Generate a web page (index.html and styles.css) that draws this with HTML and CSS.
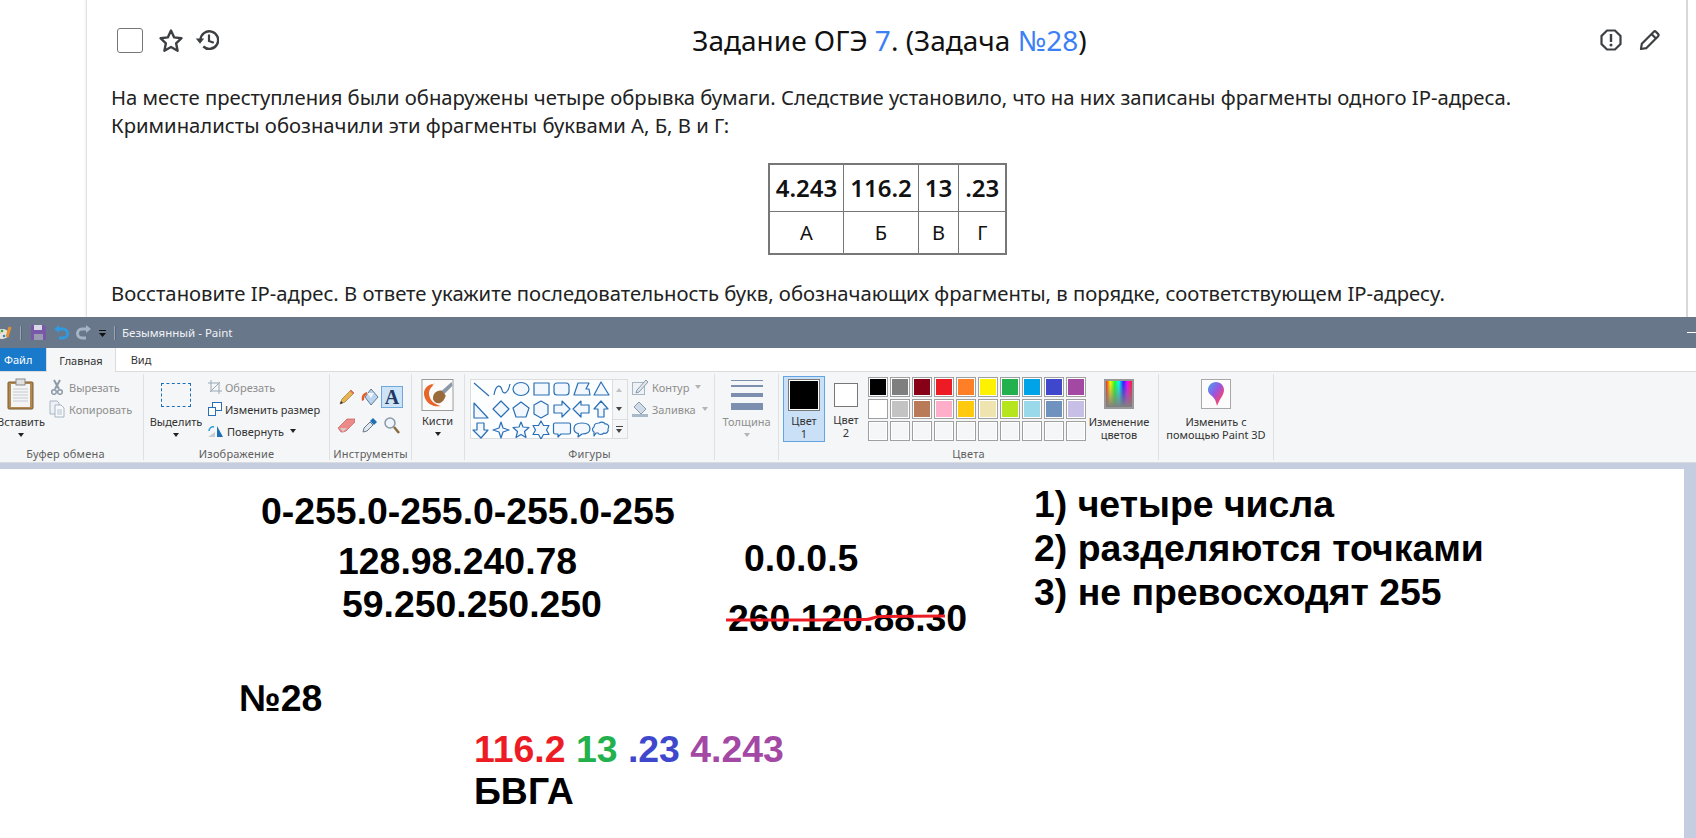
FILE: index.html
```html
<!DOCTYPE html>
<html lang="ru">
<head>
<meta charset="utf-8">
<title>Задание ОГЭ 7</title>
<link rel="stylesheet" href="styles.css">
</head>
<body>
<section class="page">
  <article class="card">
    <header class="task-head">
      <div class="head-left">
        <span class="check"></span>
        <svg class="ico star" width="26" height="25" viewBox="0 0 26 25"><path d="M13 2.500l3.200 6.900 7.300.8-5.400 5.100 1.500 7.400L13 19l-6.600 3.700 1.500-7.400-5.400-5.100 7.300-.8z" fill="none" stroke="#3c4043" stroke-width="2.400" stroke-linejoin="round"/></svg>
        <svg class="ico hist" width="24" height="24" viewBox="0 0 24 24"><path d="M5.500 12a8.800 8.800 0 1 1 2.800 6.500" fill="none" stroke="#3c4043" stroke-width="2.400"/><path d="M.8 10.500h8.400L5 15.800z" fill="#3c4043"/><path d="M14 6.500V13l4.800 1.800" fill="none" stroke="#3c4043" stroke-width="2.200"/></svg>
      </div>
      <h1 class="task-title">Задание ОГЭ <a class="lnk">7</a>. (Задача <a class="lnk">№28</a>)</h1>
      <div class="head-right">
        <svg class="ico" width="22" height="22" viewBox="0 0 22 22"><path d="M7 1.500h8L20.500 7v8L15 20.500H7L1.500 15V7z" fill="none" stroke="#3c4043" stroke-width="2.200"/><path d="M11 5v8" stroke="#3c4043" stroke-width="2.400"/><circle cx="11" cy="16" r="1.500" fill="#3c4043"/></svg>
        <svg class="ico" width="22" height="22" viewBox="0 0 22 22"><path d="M2 20l.8-5.200L14.800 2.800a1.500 1.500 0 0 1 2.100 0l2.300 2.300a1.500 1.500 0 0 1 0 2.100L7.200 19.200z M12.500 5l4.500 4.500" fill="none" stroke="#3c4043" stroke-width="2.200" stroke-linejoin="round"/></svg>
      </div>
    </header>
    <p class="para first">На месте преступления были обнаружены четыре обрывка бумаги. Следствие установило, что на них записаны фрагменты одного IP-адреса.<br>Криминалисты обозначили эти фрагменты буквами А, Б, В и Г:</p>
    <table class="frag">
      <tr><th>4.243</th><th>116.2</th><th>13</th><th>.23</th></tr>
      <tr><td>А</td><td>Б</td><td>В</td><td>Г</td></tr>
    </table>
    <p class="para last">Восстановите IP-адрес. В ответе укажите последовательность букв, обозначающих фрагменты, в порядке, соответствующем IP-адресу.</p>
  </article>
</section>

<section class="paint">
  <div class="titlebar">
    <svg class="qa" width="14" height="16" viewBox="0 0 14 16"><ellipse cx="4" cy="9" rx="7" ry="5" fill="#e8e4dc"/><circle cx="1" cy="8" r="1.300" fill="#e33"/><circle cx="4" cy="6" r="1.300" fill="#3a3"/><circle cx="6" cy="11" r="1.300" fill="#38c"/><path d="M9 12L12 2" stroke="#e89030" stroke-width="3"/></svg>
    <i class="qsep first-sep"></i>
    <svg class="qa save" width="15" height="15" viewBox="0 0 15 15"><path d="M0 0h13l2 2v13H0z" fill="#7a58a8"/><path d="M3 0h8v5H3z" fill="#d8d8e8"/><path d="M3 9h9v6H3z" fill="#9a9ab0"/></svg>
    <svg class="qa undo" width="15" height="15" viewBox="0 0 15 15"><path d="M4 4h5a4 4 0 0 1 0 9H5" fill="none" stroke="#2f9ae0" stroke-width="3"/><path d="M0 4l5-4v8z" fill="#2f9ae0"/></svg>
    <svg class="qa redo" width="15" height="15" viewBox="0 0 15 15"><path d="M11 4H6a4 4 0 0 0 0 9h4" fill="none" stroke="#a3b4c4" stroke-width="3"/><path d="M15 4l-5-4v8z" fill="#a3b4c4"/></svg>
    <svg class="qa drop" width="7" height="7" viewBox="0 0 7 7"><path d="M0 0h7v1H0zM0 3h7L3.500 7z" fill="#111"/></svg>
    <i class="qsep"></i>
    <span class="win-title">Безымянный - Paint</span>
    <span class="win-min"></span>
  </div>
  <nav class="tabs">
    <span class="tab file">Файл</span>
    <span class="tab home">Главная</span>
    <span class="tab view">Вид</span>
  </nav>
  <div class="ribbon">
    <div class="group g-clip">
      <div class="gbody">
        <div class="big paste">
          <svg class="big-ico" width="28" height="32" viewBox="0 0 28 32"><rect x="1" y="4" width="25" height="27" rx="1" fill="#b08850" stroke="#7a5a30"/><rect x="4" y="6" width="19" height="23" fill="#f4f4f4"/><path d="M6 11h15M6 14h15M6 17h15M6 20h15M6 23h15" stroke="#c4cad4"/><rect x="9" y="1" width="9" height="6" fill="#e0e0e0" stroke="#8a8a8a"/></svg>
          <span>Вставить</span><span class="caret"></span>
        </div>
        <div class="col clip-col">
          <div class="row off"><svg width="16" height="16" viewBox="0 0 16 16"><path d="M5 1l5 9M11 1L6 10" stroke="#8c9aa8" stroke-width="2"/><circle cx="5" cy="13" r="2.300" fill="none" stroke="#8c9aa8" stroke-width="1.500"/><circle cx="11" cy="13" r="2.300" fill="none" stroke="#8c9aa8" stroke-width="1.500"/></svg><span>Вырезать</span></div>
          <div class="row off"><svg width="16" height="18" viewBox="0 0 16 18"><path d="M1 1h7l2 2v11H1z" fill="#eef2f6" stroke="#a6b4c4"/><path d="M6 5h6l3 3v9H6z" fill="#f8f9fa" stroke="#a6b4c4"/><path d="M8 10h5M8 12h5M8 14h5" stroke="#b6c2d0"/></svg><span>Копировать</span></div>
        </div>
      </div>
      <div class="glabel clip-label">Буфер обмена</div>
    </div>

    <div class="group g-image">
      <div class="gbody">
        <div class="big select">
          <span class="dashed"></span>
          <span>Выделить</span><span class="caret"></span>
        </div>
        <div class="col img-col">
          <div class="row off"><svg width="14" height="14" viewBox="0 0 14 14"><path d="M3 0v11h11M0 3h11v11M2 12L12 2" fill="none" stroke="#9aa8b6"/></svg><span>Обрезать</span></div>
          <div class="row"><svg width="14" height="14" viewBox="0 0 14 14"><rect x="4.500" y=".5" width="9" height="8" fill="#fff" stroke="#2a6fb5"/><rect x=".5" y="5.500" width="7" height="8" fill="#fff" stroke="#2a6fb5"/></svg><span>Изменить размер</span></div>
          <div class="row"><svg width="16" height="14" viewBox="0 0 16 14"><path d="M9 13V2l6 11z" fill="#1f6fb5"/><path d="M0 13l7-5v5z" fill="#c8cdd2"/><path d="M1 7a4 4 0 0 1 5-4" fill="none" stroke="#2f9ae0" stroke-width="1.500"/></svg><span>Повернуть</span><span class="caret inline"></span></div>
        </div>
      </div>
      <div class="glabel">Изображение</div>
    </div>

    <div class="group g-tools">
      <div class="gbody">
        <div class="tools">
          <svg width="16" height="16" viewBox="0 0 16 16"><path d="M1 15l2-5L12 1l3 3-9 9z" fill="#e8b450" stroke="#9a7a40" stroke-width=".7"/><path d="M11 2l3 3 1-1-3-3z" fill="#e06060"/><path d="M1 15l1-3 2 2z" fill="#333"/></svg>
          <svg width="18" height="18" viewBox="0 0 18 18"><path d="M10 1l7 8-7 8-6-8z" fill="#b9d4ec" stroke="#5a7a9a"/><path d="M6 5h7l-3 5z" fill="#f4f8fc"/><path d="M6 4C2 5 0 8 1 13l2-1c0-3 1-5 3-6z" fill="#e85a20"/></svg>
          <span class="tool-a">A</span>
          <svg width="17" height="15" viewBox="0 0 17 15"><path d="M0 10l9-9h8v3l-9 9-3 1H3z" fill="#ec8a88" stroke="#c06060" stroke-width=".7"/><path d="M5 14l-3-4h7z" fill="#d8c8c8"/></svg>
          <svg width="16" height="16" viewBox="0 0 16 16"><path d="M1 15l1-4 6-6 3 3-6 6z" fill="#dfe8f0" stroke="#6c7a88"/><path d="M8 4l3-3 4 4-3 3z" fill="#1f6fb5"/></svg>
          <svg width="16" height="17" viewBox="0 0 16 17"><circle cx="6" cy="6" r="5" fill="#eef4fa" stroke="#8a98a8" stroke-width="1.500"/><path d="M10 10l5 6" stroke="#8a6a40" stroke-width="2.500"/></svg>
        </div>
      </div>
      <div class="glabel">Инструменты</div>
    </div>

    <div class="group g-brush">
      <div class="gbody">
        <div class="big brush">
          <svg class="big-ico" width="33" height="33" viewBox="0 0 33 33"><rect x=".5" y=".5" width="32" height="32" fill="#fbfbfb" stroke="#9a9a9a"/><path d="M31 3L20 13l3 3 9-9z" fill="#8a98a8"/><path d="M21 12c-5-1-10 3-9 9 2 6 10 6 13-4z" fill="#9a6a3a"/><path d="M14 5C6 5 1 11 3 18c2 7 8 11 17 10-7-2-11-6-12-11-1-4 1-8 4-10l-1-1z" fill="#e8642a"/></svg>
          <span>Кисти</span><span class="caret"></span>
        </div>
      </div>
    </div>

    <div class="group g-shapes">
      <div class="gbody">
        <div class="shapes">
          <svg width="142" height="60" viewBox="0 0 142 60" fill="#f2f8fd" stroke="#2a6fb5" stroke-width="1.200" stroke-linejoin="round">
            <path d="M3 4l15 13" fill="none"/>
            <path d="M23 16c2-12 7-10 8-5s6 4 8-6" fill="none"/>
            <ellipse cx="50" cy="10" rx="8" ry="6.500"/>
            <rect x="63" y="4" width="15" height="12"/>
            <rect x="83" y="4" width="15" height="12" rx="3"/>
            <path d="M103 16l4-12h11l-3 6h3l1 6z"/>
            <path d="M130 3l8 13h-15z"/>
            <path d="M3 24l14 15H3z"/>
            <path d="M30 22l8 8-8 8-8-8z"/>
            <path d="M50 23l8 6-3 9H45l-3-9z"/>
            <path d="M70 22l7 4v9l-7 4-7-4v-9z"/>
            <path d="M83 26h8v-4l8 8-8 8v-4h-8z"/>
            <path d="M118 26h-8v-4l-8 8 8 8v-4h8z"/>
            <path d="M130 22l7 8h-4v8h-6v-8h-4z"/>
            <path d="M6 44h7v7h4l-7 8-8-8h4z"/>
            <path d="M30 43l2 6 6 2-6 2-2 6-2-6-6-2 6-2z"/>
            <path d="M50 43l2 5 6 .5-4.500 4 1.500 6-5-3-5 3 1.500-6-4.500-4 6-.5z"/>
            <path d="M70 42l2.500 4.500H78l-2.500 4.500 2.500 4.500h-5.500L70 60l-2.500-4.500H62l2.500-4.500-2.500-4.500h5.500z"/>
            <path d="M84 44h14a1.500 1.500 0 0 1 1.500 1.500v8A1.500 1.500 0 0 1 98 55H90l-3 3v-3h-3a1.500 1.500 0 0 1-1.500-1.500v-8A1.500 1.500 0 0 1 84 44z"/>
            <path d="M111 44c5 0 8 2 8 5.500s-3 5.500-8 5.500l-4 3 .5-3.500c-3-.5-4.500-3-4.500-5 0-3.500 3-5.500 8-5.500z"/>
            <path d="M128 44c3-2 6 0 6 1 3-.5 5 3 3 5 1 3-2 5-4 4-2 2-5 2-6 0h-2l-2 3v-4c-2-1-2-4 0-5 0-3 3-4 5-4z"/>
          </svg>
        </div>
        <div class="scroller">
          <span class="sc up"></span>
          <span class="sc dn"></span>
          <span class="sc more"></span>
        </div>
        <div class="col shape-col">
          <div class="row off"><svg width="16" height="16" viewBox="0 0 16 16"><rect x=".5" y="3.500" width="12" height="12" fill="#eef2f6" stroke="#a6b4c4"/><path d="M5 11L14 1l2 2-9 10-3 1z" fill="#dfe6ee" stroke="#8c9aa8"/></svg><span>Контур</span><span class="caret inline pale"></span></div>
          <div class="row off"><svg width="16" height="16" viewBox="0 0 16 16"><path d="M7 1l7 7-5 5-7-7z" fill="#cfdbe8" stroke="#8c9aa8"/><path d="M0 13h16v3H0z" fill="#a9bacb"/></svg><span>Заливка</span><span class="caret inline pale"></span></div>
        </div>
      </div>
      <div class="glabel">Фигуры</div>
    </div>

    <div class="group g-size">
      <div class="gbody">
        <div class="big size off">
          <div class="lines"><i class="l1"></i><i class="l2"></i><i class="l3"></i><i class="l4"></i></div>
          <span>Толщина</span><span class="caret pale"></span>
        </div>
      </div>
    </div>

    <div class="group g-colors">
      <div class="gbody">
        <div class="c-btn active">
          <span class="sw black"></span>
          <span>Цвет</span><span>1</span>
        </div>
        <div class="c-btn second">
          <span class="sw white"></span>
          <span>Цвет</span><span>2</span>
        </div>
        <div class="palette">
          <i class="p1"></i><i class="p2"></i><i class="p3"></i><i class="p4"></i><i class="p5"></i><i class="p6"></i><i class="p7"></i><i class="p8"></i><i class="p9"></i><i class="p10"></i>
          <i class="p11"></i><i class="p12"></i><i class="p13"></i><i class="p14"></i><i class="p15"></i><i class="p16"></i><i class="p17"></i><i class="p18"></i><i class="p19"></i><i class="p20"></i>
          <i></i><i></i><i></i><i></i><i></i><i></i><i></i><i></i><i></i><i></i>
        </div>
        <div class="big edit">
          <span class="spectrum"></span>
          <span>Изменение</span><span>цветов</span>
        </div>
      </div>
      <div class="glabel">Цвета</div>
    </div>

    <div class="group g-3d">
      <div class="gbody">
        <div class="big p3d">
          <span class="p3d-box"><svg width="18" height="26" viewBox="0 0 18 26"><defs><linearGradient id="pg" x1="0" y1="0" x2="1" y2="1"><stop offset="0" stop-color="#3fa6f0"/><stop offset=".45" stop-color="#9a55e0"/><stop offset=".75" stop-color="#f0457a"/><stop offset="1" stop-color="#ffb020"/></linearGradient></defs><path d="M9 1c5 0 8 4 8 8 0 5-4 8-7 16-1-5-2-7-5-10C2 13 1 11 1 9c0-4 3-8 8-8z" fill="url(#pg)"/></svg></span>
          <span>Изменить с</span><span>помощью Paint 3D</span>
        </div>
      </div>
    </div>
  </div>
  <div class="strip"></div>
  <div class="workspace">
    <div class="canvas">
      <span class="ink t1">0-255.0-255.0-255.0-255</span>
      <span class="ink t2">128.98.240.78</span>
      <span class="ink t3">59.250.250.250</span>
      <span class="ink t4">0.0.0.5</span>
      <span class="ink t5">260.120.88.30</span>
      <svg class="strike" width="222" height="10" viewBox="0 0 222 10"><path d="M1 7h90l50-.5c6 0 8-3 14-3l65-.5" fill="none" stroke="#ed1c24" stroke-width="3"/></svg>
      <span class="ink t6">№28</span>
      <span class="ink t7"><b class="red">116.2</b> <b class="green">13</b> <b class="blue">.23</b> <b class="violet">4.243</b></span>
      <span class="ink t8">БВГА</span>
      <div class="ink rules">1) четыре числа<br>2) разделяются точками<br>3) не превосходят 255</div>
    </div>
  </div>
</section>
</body>
</html>
```
FILE: styles.css
```css
* { box-sizing: border-box; }
html, body { margin: 0; padding: 0; }
body { width: 1696px; height: 838px; overflow: hidden; background: #fff; font-family: "Noto Sans", sans-serif; color: #111; }

/* task card */
.page { height: 317px; padding-left: 86px; padding-right: 8px; overflow: hidden; }
.card { height: 317px; padding: 27px 24px 0 24px; border-left: 1px solid #e4e4e4; border-right: 2px solid #d8d8d8; box-shadow: -1px 0 2px rgba(0,0,0,.06); }
.task-head { display: flex; align-items: center; height: 26px; position: relative; }
.head-left { display: flex; align-items: center; padding-left: 6px; }
.check { width: 26px; height: 25px; border: 1.500px solid #777; border-radius: 3px; margin-right: 15px; }
.star { margin-right: 11px; }
.task-title { flex: 1; margin: 0; font-weight: 400; font-size: 28px; line-height: 34px; text-align: center; color: #111; padding-right: 40px; }
.lnk { color: #3d7ff5; }
.head-right { display: flex; gap: 17px; padding-right: 1px; }
.para { margin: 0; font-size: 20.250px; line-height: 28px; color: #222; white-space: nowrap; }
.para.first { margin-top: 30px; }
.para.last { margin-top: 24px; }
.frag { border-collapse: collapse; margin: 24px auto 0; border: 2px solid #777; position: relative; left: 1px; }
.frag th, .frag td { border: 1px solid #777; text-align: center; padding: 0 6px; color: #111; }
.frag th { height: 47px; font-weight: 600; font-size: 24px; }
.frag td { height: 43px; font-size: 20px; }

/* paint */
.paint { height: 521px; display: flex; flex-direction: column; font-size: 11px; }
.titlebar { height: 31px; background: #68778a; display: flex; align-items: center; color: #f0f2f5; font-size: 11.500px; position: relative; }
.qa { flex: none; }
.qa:first-child { margin-left: -2px; }
.qsep { width: 2px; height: 14px; background: #9aa5b3; margin-left: 8px; border-right: 1px solid #58677a; }
.first-sep { margin-left: 8px; }
.save { margin-left: 9px; }
.undo { margin-left: 8px; }
.redo { margin-left: 7px; }
.drop { margin-left: 8px; margin-top: 2px; }
.win-title { margin-left: 6px; }
.win-min { margin-left: auto; width: 9px; height: 1px; background: #fff; }

.tabs { height: 24px; display: flex; background: #fff; border-bottom: 1px solid #dadbdc; align-items: stretch; font-size: 11px; }
.tab { display: flex; align-items: center; justify-content: center; }
.file { width: 46px; background: #1979ca; color: #fff; justify-content: flex-start; padding-left: 4px; }
.home { width: 70px; background: #f5f6f7; border: 1px solid #dadbdc; border-bottom: 0; border-top: 0; height: 24px; color: #333; }
.view { width: 50px; color: #333; }

.ribbon { height: 91px; background: #f5f6f7; display: flex; padding-top: 2px; border-bottom: 1px solid #dadbdc; color: #333; line-height: 13px; }
.group { display: flex; flex-direction: column; height: 86px; border-right: 1px solid #dfe0e1; flex: none; }
.gbody { height: 73px; display: flex; flex: none; }
.glabel { height: 13px; text-align: center; color: #5f5f5f; line-height: 13px; letter-spacing: .2px; }
.clip-label { padding-right: 12px; }
.g-clip { width: 144px; }
.g-image { width: 186px; }
.g-tools { width: 82px; }
.g-brush { width: 53px; }
.g-shapes { width: 250px; }
.g-size { width: 64px; }
.g-colors { width: 380px; }
.g-3d { width: 115px; }

.big { display: flex; flex-direction: column; align-items: center; white-space: nowrap; padding-top: 5px; }
.big-ico { height: 32px; margin-bottom: 4px; flex: none; }
.caret { display: block; width: 0; height: 0; border: 3.500px solid transparent; border-top: 4px solid #222; border-bottom: 0; margin-top: 5px; }
.caret.inline { display: inline-block; margin: 0 0 0 6px; }
.caret.pale { border-top-color: #b4b4b4; }
.row { height: 22px; display: flex; align-items: center; white-space: nowrap; position: relative; }
.row svg { flex: none; }
.col { padding-top: 2px; }
.off { color: #8e8e8e; }

.paste { width: 44px; margin-left: -1px; }
.paste .big-ico { margin-top: -1px; margin-bottom: 5px; }
.clip-col { margin-left: 6px; }
.clip-col .row svg { margin-right: 4px; }
.select { width: 50px; margin-left: 7px; }
.dashed { width: 30px; height: 24px; border: 1px dashed #1f6fb5; margin: 4px 0 8px; }
.img-col { margin-left: 7px; }
.img-col .row svg { margin-right: 3px; }
.tools { display: grid; grid-template-columns: 23px 23px 22px; grid-template-rows: 28px 28px; align-items: center; justify-items: center; padding: 9px 0 0 5px; height: 60px; }
.tool-a { width: 22px; height: 22px; background: #cde4f7; border: 1px solid #6ea8dc; font-family: "Liberation Serif", serif; font-weight: 700; font-size: 20px; line-height: 20px; text-align: center; color: #1f3864; }
.brush { width: 33px; margin-left: 9px; }
.brush .big-ico { margin-bottom: 3px; }
.shapes { width: 143px; height: 60px; margin: 5px 0 0 5px; border: 1px solid #dcdddf; background: #fdfeff; flex: none; }
.shapes svg { display: block; margin-top: -1px; }
.scroller { width: 15px; height: 60px; margin-top: 5px; border: 1px solid #dcdddf; border-left: 0; display: flex; flex-direction: column; flex: none; }
.sc { height: 20px; position: relative; }
.sc::after { content: ""; position: absolute; left: 3px; top: 8px; border: 3.500px solid transparent; }
.up::after { border-bottom: 4px solid #c0c0c0; border-top: 0; }
.dn::after { border-top: 4px solid #444; border-bottom: 0; }
.more { border-top: 1px solid #dcdddf; }
.more::after { border-top: 4px solid #444; border-bottom: 0; top: 9px; }
.more::before { content: ""; position: absolute; left: 3px; top: 6px; width: 7px; height: 1px; background: #444; }
.shape-col { margin-left: 4px; }
.shape-col .row svg { margin-right: 4px; }
.size { width: 63px; }
.lines { width: 32px; height: 32px; margin: 1px 0 3px; display: flex; flex-direction: column; padding-top: 0; }
.lines i { display: block; background: #7c8fae; }
.l1 { height: 1px; margin-bottom: 4px; }
.l2 { height: 2px; margin-bottom: 6px; }
.l3 { height: 4px; margin-bottom: 6px; }
.l4 { height: 7px; }

.c-btn { display: flex; flex-direction: column; align-items: center; flex: none; }
.active { width: 42px; height: 66px; margin: 2px 0 0 4px; background: #c9e0f7; border: 1px solid #64a5e1; padding-top: 2px; }
.second { width: 42px; height: 66px; margin-top: 2px; padding-top: 7px; }
.sw { display: block; flex: none; }
.black { width: 32px; height: 32px; background: #000; border: 1px solid #777; box-shadow: inset 0 0 0 1px #fff; margin-bottom: 3px; outline: 0; }
.white { width: 24px; height: 24px; background: #fff; border: 1px solid #777; margin-bottom: 6px; }
.palette { display: grid; grid-template-columns: repeat(10, 20px); grid-auto-rows: 20px; gap: 2px; margin: 3px 0 0 1px; flex: none; align-self: flex-start; }
.palette i { display: block; border: 1px solid #a0a0a0; box-shadow: inset 0 0 0 1px #fff; }
.p1 { background: #000; } .p2 { background: #7f7f7f; } .p3 { background: #880015; } .p4 { background: #ed1c24; } .p5 { background: #ff7f27; }
.p6 { background: #fff200; } .p7 { background: #22b14c; } .p8 { background: #00a2e8; } .p9 { background: #3f48cc; } .p10 { background: #a349a4; }
.p11 { background: #fff; } .p12 { background: #c3c3c3; } .p13 { background: #b97a57; } .p14 { background: #ffaec9; } .p15 { background: #ffc90e; }
.p16 { background: #efe4b0; } .p17 { background: #b5e61d; } .p18 { background: #99d9ea; } .p19 { background: #7092be; } .p20 { background: #c8bfe7; }
.edit { width: 60px; margin-left: 3px; }
.spectrum { width: 30px; height: 30px; border: 2px solid #999; margin-bottom: 6px; flex: none; background: linear-gradient(to bottom, transparent, #808080), linear-gradient(to right, #ff2020, #ffff00, #20ff20, #00ffff, #2020ff, #ff00ff, #ff2020); }
.p3d { width: 114px; }
.p3d-box { width: 30px; height: 30px; border: 1px solid #a8a8a8; background: #fcfcfc; margin-bottom: 6px; display: flex; align-items: center; justify-content: center; flex: none; }

.strip { height: 6px; background: #c5cee0; flex: none; }
.workspace { flex: 1; background: #c5cee0; padding-right: 12px; }
.canvas { height: 100%; background: #fff; position: relative; }
.ink { position: absolute; font-family: "Liberation Sans", sans-serif; font-weight: 700; font-size: 37.400px; line-height: 42px; color: #000; white-space: nowrap; }
.t1 { left: 261px; top: 21px; }
.t2 { left: 338px; top: 71px; }
.t3 { left: 342px; top: 114px; }
.t4 { left: 744px; top: 68px; }
.t5 { left: 728px; top: 128px; }
.strike { position: absolute; left: 725px; top: 144px; }
.t6 { left: 239px; top: 208px; }
.t7 { left: 474px; top: 259px; }
.t8 { left: 474px; top: 301px; }
.rules { left: 1034px; top: 13px; line-height: 44px; }
.red { color: #ed1c24; } .green { color: #22b14c; } .blue { color: #3f48cc; } .violet { color: #a349a4; }
```
